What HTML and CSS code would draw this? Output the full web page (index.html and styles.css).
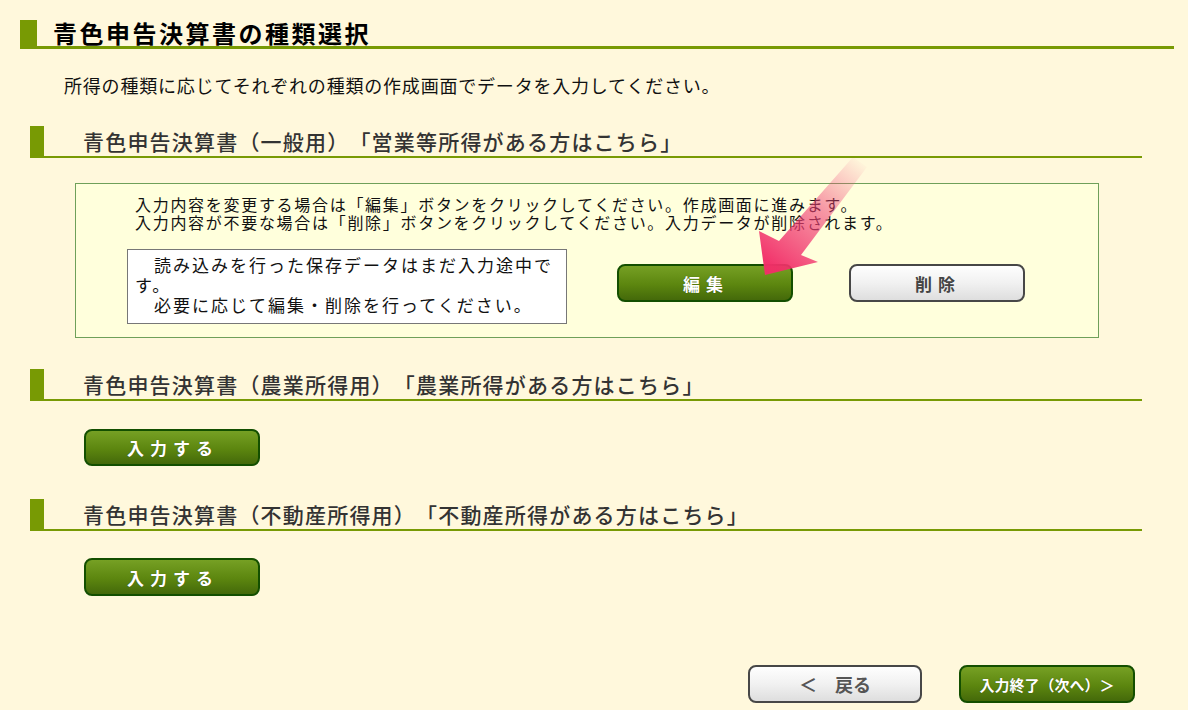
FILE: index.html
```html
<!DOCTYPE html>
<html lang="ja">
<head>
  <meta charset="UTF-8">
  <title>青色申告決算書の種類選択</title>
  <link rel="stylesheet" href="styles.css">
</head>
<body>
  <div class="page">
    <h1 class="page-title">青色申告決算書の種類選択</h1>
    <p class="intro">所得の種類に応じてそれぞれの種類の作成画面でデータを入力してください。</p>

    <h2 class="section-title">青色申告決算書（一般用）「営業等所得がある方はこちら」</h2>
    <div class="saved-box">
      <p class="saved-msg">入力内容を変更する場合は「編集」ボタンをクリックしてください。作成画面に進みます。<br>入力内容が不要な場合は「削除」ボタンをクリックしてください。入力データが削除されます。</p>
      <div class="saved-row">
        <div class="notice">　読み込みを行った保存データはまだ入力途中です。<br>　必要に応じて編集・削除を行ってください。</div>
        <button class="btn btn-green btn-edit">編集</button>
        <button class="btn btn-gray btn-delete">削除</button>
      </div>
    </div>

    <h2 class="section-title sec-2">青色申告決算書（農業所得用）「農業所得がある方はこちら」</h2>
    <button class="btn btn-green btn-input">入力する</button>

    <h2 class="section-title sec-3">青色申告決算書（不動産所得用）「不動産所得がある方はこちら」</h2>
    <button class="btn btn-green btn-input btn-input-2">入力する</button>

    <div class="nav">
      <button class="btn btn-gray btn-back">＜　戻る</button>
      <button class="btn btn-green btn-next">入力終了（次へ）＞</button>
    </div>
  </div>

  <!-- pointer arrow laid over the edit button -->
  <svg class="pointer" width="140" height="135" viewBox="740 150 140 135">
    <defs>
      <linearGradient id="arrowFade" x1="862" y1="160" x2="775" y2="268" gradientUnits="userSpaceOnUse">
        <stop offset="0" stop-color="#f04c7c" stop-opacity="0"/>
        <stop offset="0.45" stop-color="#f04478" stop-opacity="0.55"/>
        <stop offset="1" stop-color="#f22e68" stop-opacity="0.97"/>
      </linearGradient>
    </defs>
    <polygon points="765,275 759,231 779,241 853,157 867,167 801,255 818,262" fill="url(#arrowFade)"/>
  </svg>
</body>
</html>
```

FILE: styles.css
```css
body {
  margin: 0;
  background-color: #fff8dc;
  font-family: "Noto Sans CJK JP", sans-serif;
  color: #111;
  position: relative;
  text-spacing-trim: space-all;
}

.page {
  padding: 20px 14px 0 20px;
}

.page-title {
  margin: 0;
  height: 26px;
  line-height: 26px;
  padding-left: 16px;
  border-left: 17px solid #789a04;
  border-bottom: 3px solid #789a04;
  font-size: 24px;
  font-weight: bold;
  letter-spacing: 2.5px;
  color: #000;
}

.intro {
  margin: 26px 0 0 44px;
  font-size: 18px;
  line-height: 20px;
  letter-spacing: 0.8px;
}

.section-title {
  margin: 31px 32px 0 10px;
  height: 30px;
  line-height: 30px;
  padding-left: 39px;
  border-left: 14px solid #789a04;
  border-bottom: 2px solid #789a04;
  font-size: 21px;
  font-weight: 500;
  letter-spacing: 1.2px;
  color: #333;
}

.saved-box {
  margin: 25px 75px 0 55px;
  padding: 11px 0 13px 0;
  border: 1px solid #6fa05a;
  background-color: #ffffdc;
}

.saved-msg {
  margin: 0 0 0 59px;
  font-size: 16px;
  line-height: 18px;
  letter-spacing: 1.7px;
}

.saved-row {
  display: flex;
  align-items: flex-start;
  margin: 18px 0 0 51px;
}

.notice {
  box-sizing: border-box;
  width: 440px;
  height: 75px;
  padding: 5px 5px 5px 7px;
  border: 1px solid #777;
  background-color: #fff;
  font-size: 17px;
  line-height: 20px;
  letter-spacing: 2px;
}

.btn {
  box-sizing: border-box;
  display: block;
  width: 176px;
  height: 38px;
  border-radius: 8px;
  font-family: "Noto Sans CJK JP", sans-serif;
  font-weight: bold;
  font-size: 17px;
  cursor: pointer;
}

.btn-green {
  border: 2px solid #134f00;
  background: linear-gradient(#76a024, #5c860f 55%, #44690a);
  color: #fff;
  text-shadow: 0 0 1px rgba(0, 0, 0, 0.4);
}

.btn-gray {
  border: 2px solid #474747;
  background: linear-gradient(#fefefe, #f1f1f1 50%, #dedede);
  color: #444;
}

.btn-edit {
  margin: 15px 0 0 50px;
  letter-spacing: 6px;
  padding-left: 8px;
}

.btn-delete {
  margin: 15px 0 0 56px;
  letter-spacing: 6px;
  padding-left: 8px;
}

.btn-input {
  margin: 28px 0 0 64px;
  height: 37px;
  letter-spacing: 6px;
  padding-left: 8px;
}

.sec-3 {
  margin-top: 33px;
}

.btn-input-2 {
  margin-top: 27px;
  height: 38px;
}

.nav {
  display: flex;
  justify-content: flex-end;
  gap: 37px;
  margin: 69px 39px 0 0;
}

.btn-back {
  width: 174px;
  font-size: 18px;
  color: #555;
}

.btn-next {
  width: 176px;
  font-size: 15px;
  padding: 0;
}

.pointer {
  position: absolute;
  left: 740px;
  top: 150px;
}
```
